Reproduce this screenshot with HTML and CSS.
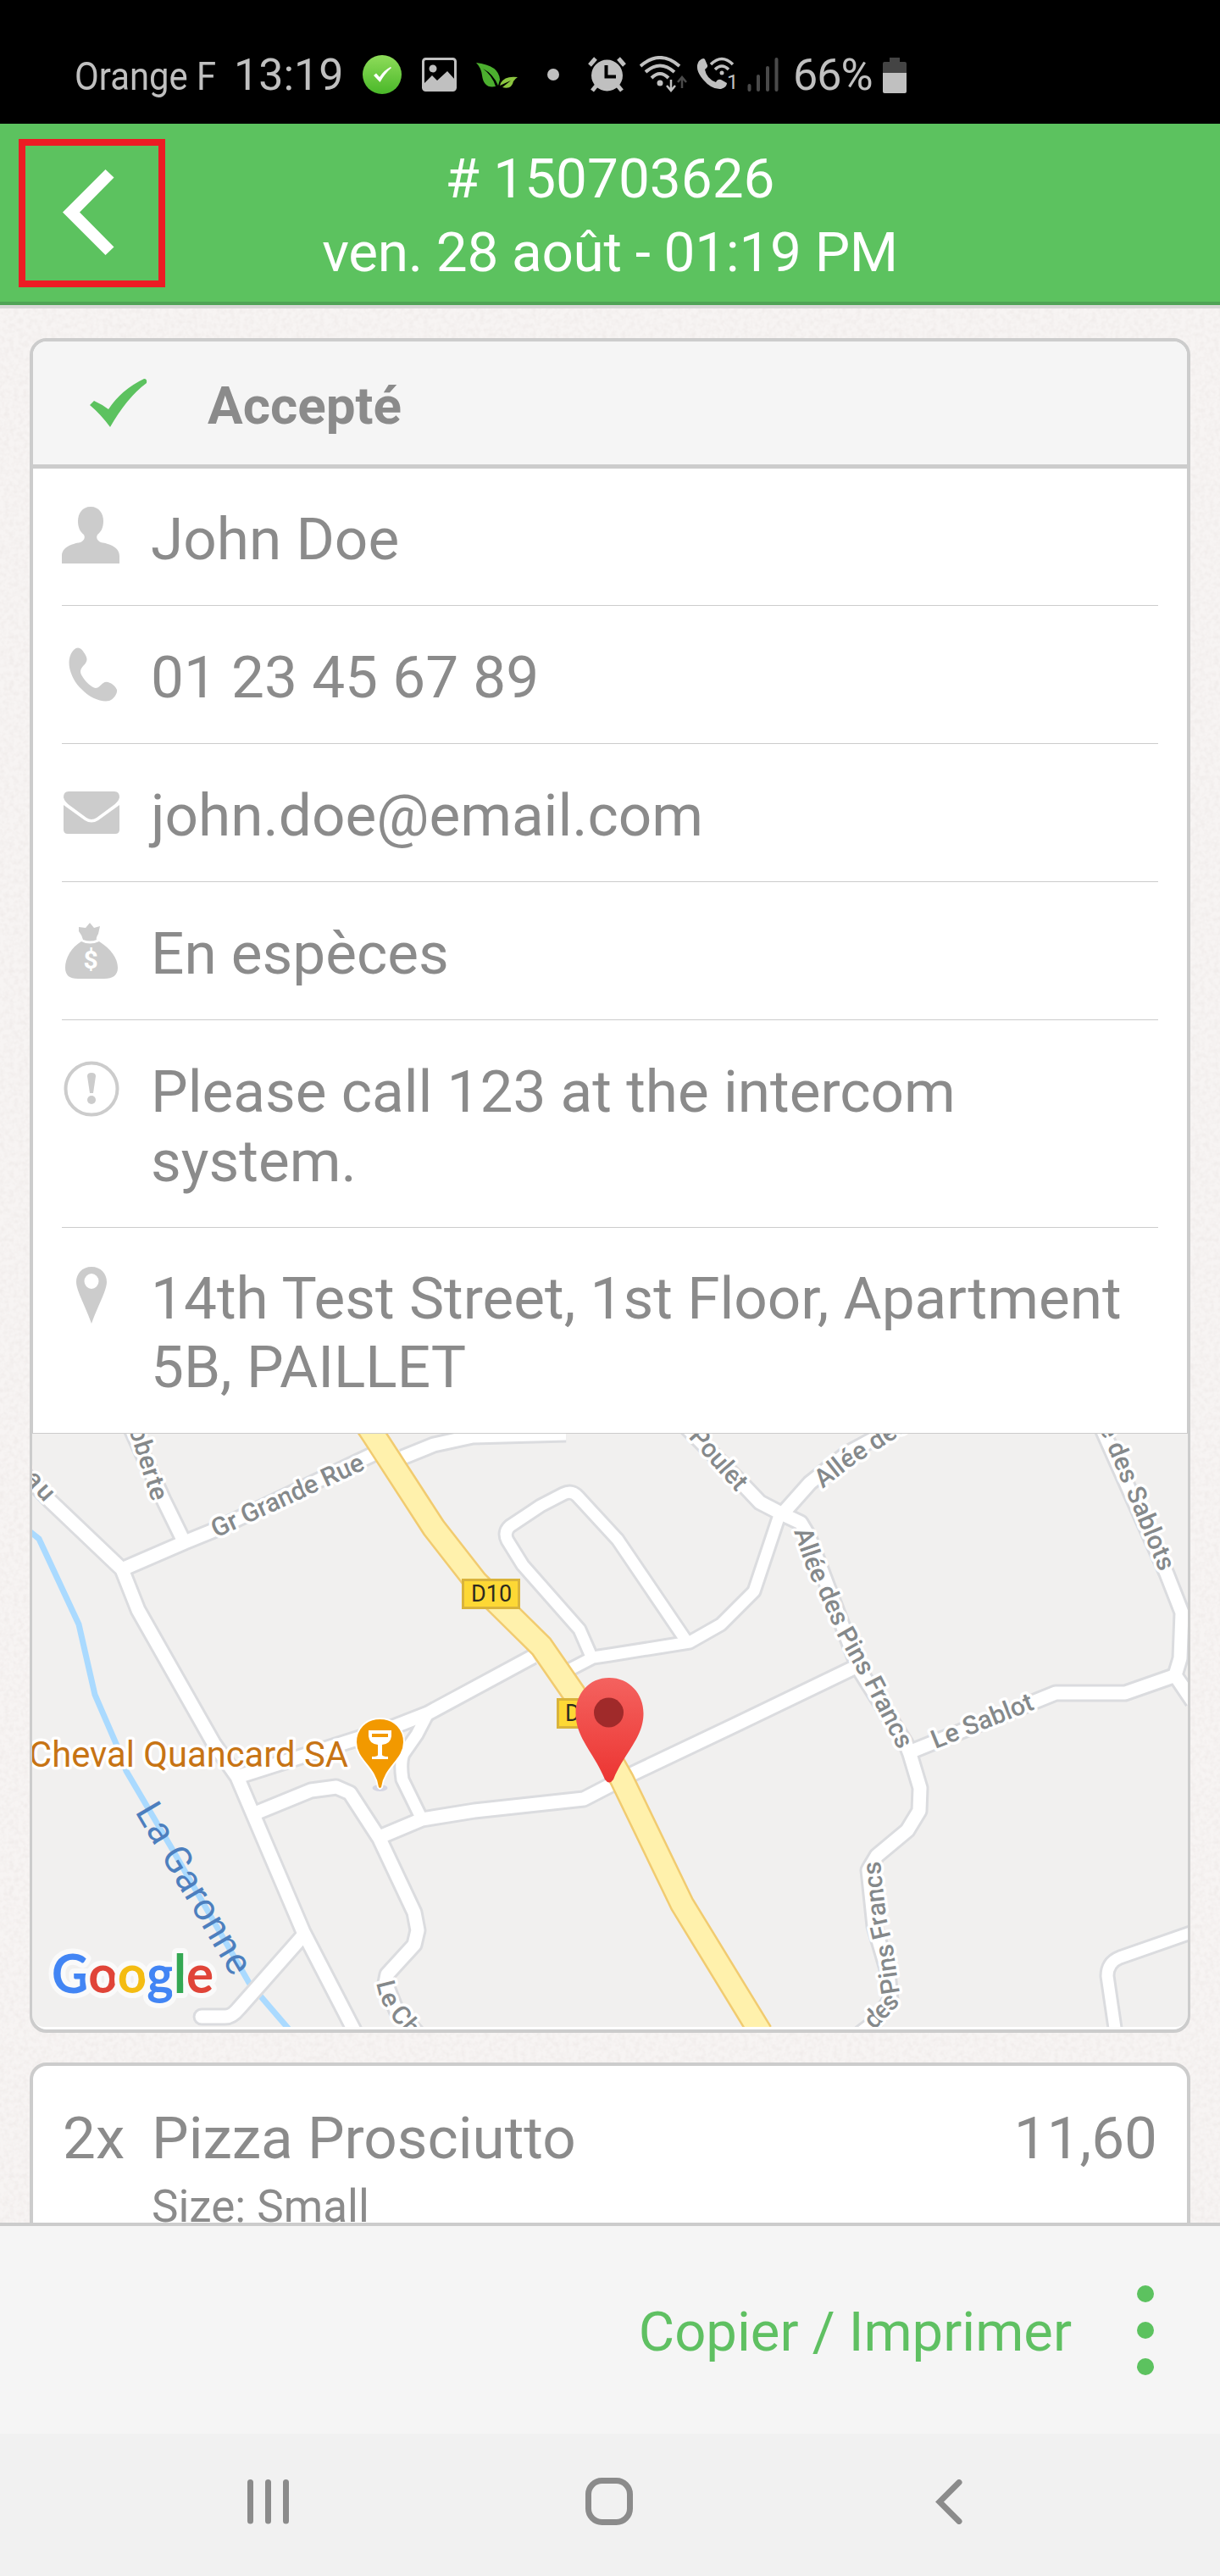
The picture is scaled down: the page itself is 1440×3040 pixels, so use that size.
FILE: index.html
```html
<!DOCTYPE html>
<html lang="fr">
<head>
  <meta charset="UTF-8">
  <title>Order details</title>
  <link rel="stylesheet" href="styles.css">
</head>
<body>

  <!-- Phone status bar -->
  <div class="status-bar">
    <span class="carrier">Orange F</span>
    <span class="clock">13:19</span>
    <svg class="st-check" width="46" height="46" viewBox="0 0 46 46">
      <defs>
        <linearGradient id="okGrad" x1="0" y1="0" x2="0" y2="1">
          <stop offset="0" stop-color="#8fdc5a"/>
          <stop offset="1" stop-color="#4ab829"/>
        </linearGradient>
      </defs>
      <circle cx="23" cy="23" r="23" fill="url(#okGrad)"/>
      <path d="M13 24 L16 21.500 L20 26 Q25 18 33 14 L34 15 Q26 22 20.500 32 Z" fill="#fff"/>
    </svg>
    <svg class="st-image" width="42" height="40" viewBox="0 0 42 40">
      <rect x="1.500" y="1.500" width="38" height="37" rx="3" fill="none" stroke="#c0c0c0" stroke-width="3"/>
      <circle cx="13" cy="13" r="4.500" fill="#c0c0c0"/>
      <path d="M3 30 L12 21 L18 27 L30 16 L39 26 V38 H3 Z" fill="#c0c0c0"/>
    </svg>
    <svg class="st-leaf" width="49" height="30" viewBox="0 0 49 30">
      <path d="M0 0 Q27 3 28 20 L26 27 Q20 13 8 7 Q19 15 23 28 Q9 31 7 15 Q6 6 0 0 Z" fill="#4caf2f"/>
      <path d="M49 17 Q34 15 29 24 L28 27 L41 21 L31 29 Q42 32 44 22 Q46 19 49 17 Z" fill="#8bc53f"/>
    </svg>
    <span class="st-dot"></span>
    <svg class="st-alarm" width="45" height="42" viewBox="0 0 45 42">
      <g stroke="#c0c0c0" stroke-width="5">
        <path d="M2 10 L9 2 M43 10 L36 2 M5 40 L10 34 M40 40 L35 34"/>
      </g>
      <circle cx="22.500" cy="22" r="18.500" fill="#c0c0c0"/>
      <path d="M21.500 10 V23.500 H33" fill="none" stroke="#000" stroke-width="4"/>
    </svg>
    <svg class="st-wifi" width="56" height="44" viewBox="0 0 56 44">
      <g fill="none" stroke="#c0c0c0" stroke-width="4">
        <path d="M1 12 Q24 -8 47 12"/>
        <path d="M7 19 Q24 4 41 19"/>
        <path d="M14 26 Q24 16 34 26"/>
      </g>
      <circle cx="24" cy="32" r="3.500" fill="#c0c0c0"/>
      <path d="M37 28 V41 M32 35 L37 41 L42 35" fill="none" stroke="#c0c0c0" stroke-width="2.500"/>
      <path d="M50 38 V26 M45 31 L50 25 L55 31" fill="none" stroke="#4a4a4a" stroke-width="2.500"/>
    </svg>
    <svg class="st-call" width="50" height="40" viewBox="0 0 50 40">
      <path d="M3 4 Q8 -1 10 2 L13 9 Q14 11 10 14 Q12 25 23 29 Q25 25 29 26 L36 30 Q36 35 29 37 Q18 38 8 26 Q-3 13 3 4 Z" fill="#c0c0c0"/>
      <g fill="none" stroke="#c0c0c0" stroke-width="3.500">
        <path d="M17 8 Q30 -5 43 8"/>
        <path d="M22 14 Q30 6 38 14"/>
      </g>
      <circle cx="30" cy="18" r="2.500" fill="#c0c0c0"/>
      <text x="36" y="37" font-size="24" fill="#c0c0c0">1</text>
    </svg>
    <svg class="st-signal" width="38" height="40" viewBox="0 0 38 40">
      <path d="M2.500 33 V38 M13 22 V38 M24 12 V38 M34.500 2 V38" stroke="#4a4a4a" stroke-width="4" stroke-linecap="round"/>
    </svg>
    <span class="percent">66%</span>
    <svg class="st-battery" width="28" height="43" viewBox="0 0 28 43">
      <path d="M8 1 H20 V6 H26 Q28 6 28 8 V20 H0 V8 Q0 6 2 6 H8 Z" fill="#444"/>
      <path d="M0 19 H28 V41 Q28 43 26 43 H2 Q0 43 0 41 Z" fill="#c0c0c0"/>
    </svg>
  </div>

  <!-- App header -->
  <header class="app-header">
    <button class="back-btn">
      <svg width="61" height="102" viewBox="0 0 61 102">
        <path d="M50.500 0 L60.500 9.500 L20 50.500 L60.500 91.500 L50.500 101 L0 50.500 Z" fill="#fff"/>
      </svg>
    </button>
    <div class="title">
      <div># 150703626</div>
      <div class="date">ven. 28 août - 01:19 PM</div>
    </div>
  </header>

  <main class="content">
    <!-- paper texture -->
    <svg class="texture" width="1440" height="2263">
      <filter id="paper" x="0" y="0" width="100%" height="100%">
        <feTurbulence type="fractalNoise" baseFrequency="0.18" numOctaves="2" seed="4"/>
        <feColorMatrix values="0 0 0 0 0.5  0 0 0 0 0.42  0 0 0 0 0.4  0.22 0 0 0 -0.08"/>
      </filter>
      <rect width="1440" height="2263" filter="url(#paper)"/>
    </svg>

    <section class="card">
      <div class="card-head">
        <svg width="68" height="57" viewBox="0 0 68 57">
          <path d="M0 31 L5 26 Q14 30 22 36 Q37 13 64 0 Q68 0 67 5 Q44 22 24 57 Q13 42 0 31 Z" fill="#5cc25f"/>
        </svg>
        <h3>Accepté</h3>
      </div>

      <div class="row first">
        <svg class="icon" viewBox="0 0 70 70">
          <path d="M34 0 C44 0 49 8 49 17 C49 25 46 30 42 33 C40 37 42 40 46 42 C57 44 68 48 68 58 V67 H0 V58 C0 48 11 44 22 42 C26 40 28 37 26 33 C22 30 19 25 19 17 C19 8 24 0 34 0 Z"/>
        </svg>
        <p>John Doe</p>
      </div>
      <div class="row">
        <svg class="icon" viewBox="0 0 70 70">
          <path d="M14 6 C19 1 23 4 26 9 C30 15 31 18 27 23 C21 29 21 32 24 37 C28 44 35 50 40 51 C43 51 45 48 49 45 C54 41 63 48 65 53 C66 58 60 65 56 66 C47 68 33 63 23 52 C12 42 2 19 14 6 Z"/>
        </svg>
        <p>01 23 45 67 89</p>
      </div>
      <div class="row">
        <svg class="icon" viewBox="0 0 70 70">
          <path d="M8 10 H62 Q68 10 68 17 Q67 22 60 27 L41 41 Q35 45 29 41 L10 27 Q3 22 2 17 Q2 10 8 10 Z"/>
          <path d="M2 26 L27 44 Q35 49 43 44 L68 26 V55 Q68 60 63 60 H7 Q2 60 2 55 Z"/>
        </svg>
        <p>john.doe@email.com</p>
      </div>
      <div class="row">
        <svg class="icon" viewBox="0 0 70 70">
          <path d="M20 7 L28 8 L33 2 L38 8 L45 6 L43 15 Q40 20 41 22 Q34 25 25 22 Q24 17 20 12 Z"/>
          <path d="M23 24 Q33 29 44 24 C58 33 66 44 66 55 C66 64 60 68 50 68 H19 C9 68 4 64 4 55 C4 44 11 31 23 24 Z"/>
          <text class="dollar" x="34" y="56">$</text>
        </svg>
        <p>En espèces</p>
      </div>
      <div class="row">
        <svg class="icon" viewBox="0 0 70 70">
          <circle cx="35" cy="35" r="30.500" fill="none" stroke="#ccc" stroke-width="4"/>
          <path d="M30 20 Q30 16 35 16 Q40 16 40 20 L37 40 H33 Z"/>
          <circle cx="35" cy="48" r="5"/>
        </svg>
        <p>Please call 123 at the intercom system.</p>
      </div>
      <div class="row last">
        <svg class="icon" viewBox="0 0 70 70">
          <path fill-rule="evenodd" d="M35 1 C46 1 53 9 53 19 C53 29 42 48 35 68 C28 48 17 29 17 19 C17 9 24 1 35 1 Z M35 9 A8.500 9 0 1 0 35 27 A8.500 9 0 1 0 35 9 Z"/>
        </svg>
        <p>14th Test Street, 1st Floor, Apartment 5B, PAILLET</p>
      </div>

      <!-- Map -->
      <svg class="map" width="1364" height="700" viewBox="38 1692 1364 700">
        <defs>
          <linearGradient id="pinGrad" x1="0" y1="0" x2="0" y2="1">
            <stop offset="0" stop-color="#f4625f"/>
            <stop offset="1" stop-color="#ec3532"/>
          </linearGradient>
          <g id="roads">
            <path d="M144 1852 L218 1820 L250 1807 L443 1715"/>
            <path d="M475 1720 L512 1705 L558 1695 L668 1692"/>
            <path d="M20 1730 L60 1772 L144 1852 L163 1900 L252 2057 L280 2097 L358 2280 L420 2400"/>
            <path d="M152 1680 L193 1770 L216 1817"/>
            <path d="M629 1955 L505 2022 L459 2040 L280 2097"/>
            <path d="M301 2140 L367 2113 L397 2109 L413 2116 L448 2170 L489 2257 L493 2278 L489 2295 L457 2330 L455 2340 L468 2373 L495 2402"/>
            <path d="M448 2168 L498 2147 L560 2137 L689 2123 L745 2094 L867 2036 L1006 1969"/>
            <path d="M358 2284 L282 2370 Q274 2380 266 2380 H238" stroke-linecap="round"/>
            <path d="M806 1680 L878 1753 L897 1773 L926 1788 L945 1797 L954 1812 L1014 1970 L1069 2057 L1074 2070 L1086 2110 L1085 2137 L1071 2160 L1035 2190 L1025 2207 L1032 2273 L1048 2327 L1051 2360 L1032 2387 L1015 2400"/>
            <path d="M924 1786 L956 1750 L1000 1715 L1065 1680"/>
            <path d="M1078 2066 L1246 1998 H1328 L1388 1977"/>
            <path d="M1298 1680 L1377 1857 L1395 1903 L1393 1957 L1387 1977 L1408 2008"/>
          </g>
          <g id="lanes">
            <path d="M698 1955 L684 1923 L617 1847 L599 1818 Q594 1808 602 1801 L638 1777 L665 1763 Q675 1758 682 1766 L729 1817 L811 1938"/>
            <path d="M673 1970 L700 1956 L720 1953 L814 1938 L851 1917 L890 1878 L920 1788"/>
            <path d="M505 2022 L492 2047 L476 2070 Q472 2080 475 2100 L498 2147"/>
            <path d="M1408 2280 L1322 2310 Q1307 2316 1307 2332 L1317 2400"/>
          </g>
          <path id="river-line" d="M159 2138 L275 2335"/>
          <path id="p-grande" d="M255 1815 L433 1733"/>
          <path id="p-roberte" d="M152 1687 L180 1774"/>
          <path id="p-eau" d="M15 1732 L55 1776"/>
          <path id="p-poulet" d="M812 1696 L872 1764"/>
          <path id="p-allee" d="M971 1757 L1004 1731 L1084 1680"/>
          <path id="p-pins" d="M937 1807 L953 1854 L967 1881 L990 1933 L1022 1990 L1064 2072"/>
          <path id="p-sablot" d="M1104 2064 L1224 2016"/>
          <path id="p-sablots" d="M1297 1684 L1370 1858"/>
          <path id="p-des" d="M1032 2396 L1064 2362"/>
          <path id="p-francs" d="M1062 2352 L1053 2292 L1046 2262 L1038 2190"/>
          <path id="p-clos" d="M444 2340 L448 2356 L457 2375 L490 2414"/>
        </defs>

        <rect x="38" y="1692" width="1364" height="700" fill="#f1f0ef"/>
        <path class="river" d="M36 1808 L46 1816 L93 1917 L112 2000 L138 2060 L149 2090 L202 2180 L294 2340 L343 2397"/>

        <use href="#roads" class="road-edge"/>
        <use href="#lanes" class="lane-edge"/>
        <use href="#roads" class="road"/>
        <use href="#lanes" class="lane"/>

        <path class="main-edge" d="M432 1680 L440 1692 L512 1803 L562 1867 L639 1943 L677 1998 L734 2100 L805 2247 L898 2399"/>
        <path class="main-road" d="M432 1680 L440 1692 L512 1803 L562 1867 L639 1943 L677 1998 L734 2100 L805 2247 L898 2399"/>

        <g class="street">
          <text><textPath href="#p-grande" textLength="195">Gr Grande Rue</textPath></text>
          <text><textPath href="#p-roberte" textLength="90">oberte</textPath></text>
          <text><textPath href="#p-eau" textLength="56">eau</textPath></text>
          <text><textPath href="#p-poulet" textLength="87">Poulet</textPath></text>
          <text><textPath href="#p-allee">Allée des</textPath></text>
          <text><textPath href="#p-pins" textLength="287">Allée des Pins Francs</textPath></text>
          <text><textPath href="#p-sablot" textLength="127">Le Sablot</textPath></text>
          <text><textPath href="#p-sablots" textLength="186">e des Sablots</textPath></text>
          <text><textPath href="#p-des" textLength="45">des</textPath></text>
          <text><textPath href="#p-francs" textLength="158">Pins Francs</textPath></text>
          <text><textPath href="#p-clos">Le Ch</textPath></text>
        </g>
        <text class="water"><textPath href="#river-line" textLength="227">La Garonne</textPath></text>
        <text class="poi" x="411" y="2085" textLength="377" lengthAdjust="spacingAndGlyphs">Cheval Quancard SA</text>

        <g class="shield">
          <rect x="546.500" y="1864.500" width="66" height="33"/>
          <text x="556" y="1890">D10</text>
          <rect x="658.500" y="2005.500" width="66" height="33"/>
          <text x="667" y="2031">D10</text>
        </g>

        <!-- wine shop marker -->
        <ellipse cx="448.500" cy="2110" rx="9" ry="4" fill="#d5d6e2"/>
        <path d="M448.500 2028 C466 2028 477 2041 477 2056 C477 2077 454 2085 451 2109 Q448.500 2113 446 2109 C443 2085 420 2077 420 2056 C420 2041 431 2028 448.500 2028 Z" fill="#f29900" stroke="#fff" stroke-width="2"/>
        <path d="M435 2042 H462 V2049 Q461 2058 451 2059 V2071 Q452 2073 458 2073 V2076 H439 V2073 Q446 2073 446 2071 V2059 Q436 2058 435 2049 Z" fill="#fff"/>
        <rect x="439" y="2046" width="19" height="4" fill="#f29900"/>

        <!-- delivery address marker -->
        <path d="M719 1980 C743 1980 759.500 1999 759.500 2022 C759.500 2051 737 2068 724 2100 Q719 2107 714 2100 C701 2068 679.500 2051 679.500 2022 C679.500 1999 695 1980 719 1980 Z" fill="url(#pinGrad)"/>
        <circle cx="718.500" cy="2021" r="17.500" fill="#a02a2a"/>

        <text class="google" x="61" y="2352" textLength="191" lengthAdjust="spacingAndGlyphs"><tspan fill="#4285f4">G</tspan><tspan fill="#e04438">o</tspan><tspan fill="#f4bc12">o</tspan><tspan fill="#4285f4">g</tspan><tspan fill="#34a853">l</tspan><tspan fill="#e04438">e</tspan></text>
      </svg>
    </section>

    <section class="card order">
      <div class="order-line">
        <span class="qty">2x</span>
        <div class="product">
          <div>Pizza Prosciutto</div>
          <div class="option">Size: Small</div>
        </div>
        <span class="price">11,60</span>
      </div>
    </section>
  </main>

  <footer class="action-bar">
    <span class="action">Copier / Imprimer</span>
    <div class="dots"><i></i><i></i><i></i></div>
  </footer>

  <!-- Android navigation -->
  <nav class="nav-bar">
    <svg width="50" height="53" viewBox="0 0 50 53">
      <path d="M3.500 3.500 V49 M24.500 3.500 V49 M45.500 3.500 V49"/>
    </svg>
    <svg class="home" width="56" height="56" viewBox="0 0 56 56">
      <rect x="3.500" y="3.500" width="49" height="49" rx="16"/>
    </svg>
    <svg width="32" height="53" viewBox="0 0 32 53">
      <path d="M28 3.500 L5 26.500 L28 49.500"/>
    </svg>
  </nav>

</body>
</html>
```
FILE: styles.css
```css
* {
  box-sizing: border-box;
}

body {
  margin: 0;
  width: 1440px;
  height: 3040px;
  display: flex;
  flex-direction: column;
  font-family: Roboto, "Liberation Sans", sans-serif;
  color: #8b8b8b;
  background: #f7f4f3;
  overflow: hidden;
}

svg {
  display: block;
  flex-shrink: 0;
}

/* status bar */
.status-bar {
  height: 146px;
  padding: 30px 0 0 88px;
  display: flex;
  align-items: center;
  background: #000;
  color: #c0c0c0;
  font-size: 52px;
  line-height: 61px;
}

.carrier {
  width: 188px;
  padding-top: 2px;
  font-size: 47px;
  white-space: nowrap;
  transform: scaleX(0.89);
  transform-origin: left;
}

.clock {
  width: 152px;
  padding-top: 1px;
}

.st-image {
  margin-left: 24px;
}

.st-leaf {
  margin: 2px 0 0 22px;
}

.st-dot {
  width: 14px;
  height: 14px;
  margin-left: 35px;
  border-radius: 50%;
  background: #c0c0c0;
}

.st-alarm {
  margin-left: 34px;
}

.st-wifi {
  margin-left: 16px;
}

.st-call {
  margin-left: 11px;
  overflow: visible;
}

.st-signal {
  margin-left: 10px;
}

.percent {
  width: 106px;
  margin-left: 16px;
  padding-top: 1px;
  white-space: nowrap;
  letter-spacing: -1px;
}

/* header */
.app-header {
  position: relative;
  height: 214px;
  padding-top: 21px;
  background: #5cc25f;
  border-bottom: 4px solid #50a456;
  box-shadow: 0 4px 0 #d8d8d6;
  color: #fff;
  font-size: 65.7px;
  line-height: 87px;
  text-align: center;
  z-index: 1;
}

.date {
  letter-spacing: -0.3px;
}

.back-btn {
  position: absolute;
  left: 22px;
  top: 18px;
  width: 173px;
  height: 175px;
  padding: 0 0 2px 44px;
  background: none;
  border: 8px solid #ec1c24;
}

/* content */
.content {
  position: relative;
  flex: 1;
  min-height: 0;
  padding: 39px 35px 0;
  overflow: hidden;
}

.texture {
  position: absolute;
  top: 0;
  left: 0;
}

.card {
  position: relative;
  background: #fff;
  border: 4px solid #ccc;
  border-radius: 20px;
}

.card-head {
  height: 150px;
  padding-left: 67px;
  display: flex;
  align-items: center;
  background: #f5f5f5;
  border-bottom: 5px solid #ccc;
  border-radius: 16px 16px 0 0;
}

.card-head h3 {
  margin: 5px 0 0 71px;
  font-size: 62px;
  font-weight: 700;
}

.row {
  display: flex;
  margin: 0 34px;
  padding: 44px 0 36.5px;
  border-bottom: 1px solid #ccc;
  font-size: 69.3px;
  line-height: 81.5px;
}

.row.first {
  padding-top: 43px;
}

.row.last {
  margin: 0;
  padding: 43px 20px 36px 34px;
}

.row p {
  margin: 0;
}

.icon {
  width: 70px;
  height: 70px;
  margin: 2px 35px 0 0;
  fill: #ccc;
}

.dollar {
  font-size: 30px;
  font-weight: 700;
  fill: #fff;
  text-anchor: middle;
}

/* map */
.map {
  margin: 0 -1px 3px;
  border-radius: 0 0 14px 14px;
}

.river {
  fill: none;
  stroke: #aadaff;
  stroke-width: 7;
}

.road-edge,
.road,
.lane-edge,
.lane,
.main-edge,
.main-road {
  fill: none;
  stroke-linejoin: round;
}

.road-edge {
  stroke: #dbdcdf;
  stroke-width: 21;
}

.road {
  stroke: #fff;
  stroke-width: 15;
}

.lane-edge {
  stroke: #dbdcdf;
  stroke-width: 19;
}

.lane {
  stroke: #fff;
  stroke-width: 13;
}

.main-edge {
  stroke: #f1cb70;
  stroke-width: 30;
}

.main-road {
  stroke: #fff1ac;
  stroke-width: 25;
}

.street {
  font-size: 30.5px;
  font-weight: 500;
  fill: #85898b;
  stroke: #fff;
  stroke-width: 7;
  stroke-linejoin: round;
  paint-order: stroke;
}

.water {
  font-size: 44px;
  fill: #4d7fbe;
}

.poi {
  font-size: 42px;
  fill: #c77414;
  stroke: #fff;
  stroke-width: 7;
  stroke-linejoin: round;
  paint-order: stroke;
  text-anchor: end;
}

.shield rect {
  fill: #fdd835;
  stroke: #d9b33b;
  stroke-width: 3;
}

.shield text {
  font-size: 27px;
  fill: #2d2a20;
}

.google {
  font-family: Lato, sans-serif;
  font-size: 63px;
  font-weight: 700;
  stroke: #fafafa;
  stroke-width: 12;
  stroke-linejoin: round;
  paint-order: stroke;
}

/* order */
.order {
  margin-top: 35px;
  height: 400px;
}

.order-line {
  display: flex;
  padding: 45px 35px 0 35px;
  font-size: 69.2px;
  line-height: 81.5px;
}

.qty {
  width: 105px;
}

.product {
  flex: 1;
}

.option {
  padding-top: 5px;
  font-size: 53px;
  line-height: 70px;
}

/* bottom bars */
.action-bar {
  height: 249px;
  padding-right: 78px;
  display: flex;
  align-items: center;
  justify-content: flex-end;
  background: #f5f5f5;
  border-top: 4px solid #ccc;
  color: #5fc062;
  font-size: 65.2px;
}

.action {
  padding-top: 5px;
}

.dots {
  display: flex;
  flex-direction: column;
  gap: 23px;
  margin-left: 77px;
}

.dots i {
  width: 20px;
  height: 20px;
  border-radius: 50%;
  background: #5cc25f;
}

.nav-bar {
  height: 168px;
  padding: 0 304px 8px 292px;
  display: flex;
  align-items: center;
  justify-content: space-between;
  background: #f1f1f1;
}

.nav-bar svg {
  fill: none;
  stroke: #8b8b8b;
  stroke-width: 7;
  stroke-linecap: round;
}

.nav-bar .home {
  margin-right: 9px;
}
```
